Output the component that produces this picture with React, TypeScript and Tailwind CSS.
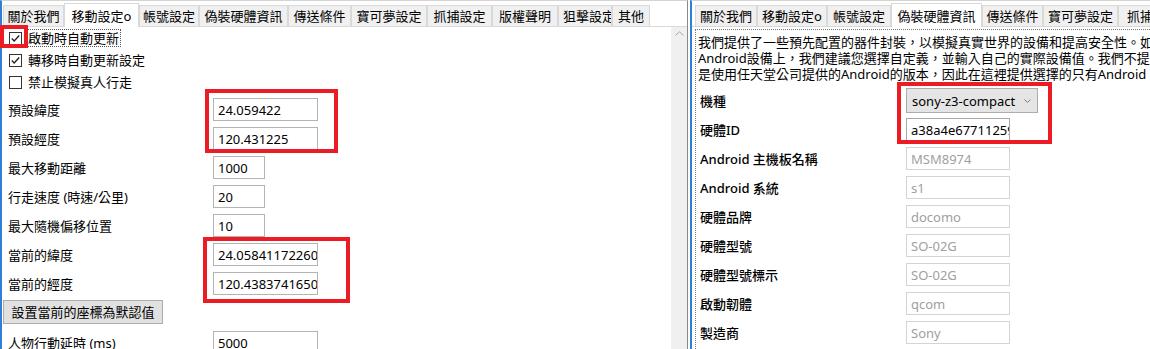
import React from "react";

/* ---------- shared bits ---------- */
function Tab({ label, w, active, clip }: { label: string; w: number; active?: boolean; clip?: boolean }) {
  return (
    <div
      className={
        active
          ? "relative z-10 mb-[-1px] flex h-[24px] shrink-0 items-center justify-center border border-b-0 border-[#d9d9d9] bg-white"
          : "flex h-[21px] shrink-0 items-center justify-center border border-b-0 border-[#d9d9d9] bg-[#f0f0f0]"
      }
      style={{ width: w }}
    >
      <span className={clip ? "overflow-hidden whitespace-nowrap pl-[4px] self-stretch flex items-center w-full" : "whitespace-nowrap"}>
        {label}
      </span>
    </div>
  );
}

function Check({ on }: { on?: boolean }) {
  return (
    <svg width="13" height="13" viewBox="0 0 13 13" className="shrink-0">
      <rect x="0.5" y="0.5" width="12" height="12" fill="#fff" stroke="#333" />
      {on && <path d="M2.8 6.6 L5.2 9 L10.2 3.6" fill="none" stroke="#222" strokeWidth="1.4" />}
    </svg>
  );
}

function Field({ label, value, w = 105 }: { label: string; value: string; w?: number }) {
  return (
    <div className="flex h-[29px] items-center pl-[6px]">
      <div className="w-[205px] shrink-0 whitespace-nowrap">{label}</div>
      <div
        className="flex h-[23px] items-center overflow-hidden whitespace-nowrap border border-[#b4b4b4] bg-white pl-[4px]"
        style={{ width: w }}
      >
        {value}
      </div>
    </div>
  );
}

function HwRow({ label, value, off }: { label: string; value: string; off?: boolean }) {
  return (
    <div className="flex h-[29px] items-center pl-[4px]">
      <div className="w-[206px] shrink-0 whitespace-nowrap font-medium">{label}</div>
      <div
        className={
          off
            ? "flex h-[23px] w-[104px] items-center overflow-hidden whitespace-nowrap border border-[#d4d4d4] bg-white pl-[4px] text-[#a0a0a0]"
            : "flex h-[23px] w-[104px] items-center overflow-hidden whitespace-nowrap border border-[#a8a8a8] bg-white pl-[4px]"
        }
      >
        {value}
      </div>
    </div>
  );
}

const leftTabs = [
  { label: "關於我們", w: 61 },
  { label: "移動設定o", w: 75, active: true },
  { label: "帳號設定", w: 60 },
  { label: "偽裝硬體資訊", w: 89 },
  { label: "傳送條件", w: 63 },
  { label: "寶可夢設定", w: 76 },
  { label: "抓捕設定", w: 65 },
  { label: "版權聲明", w: 66 },
  { label: "狙擊設定", w: 54, clip: true },
  { label: "其他", w: 38 },
];

const rightTabs = [
  { label: "關於我們", w: 62 },
  { label: "移動設定o", w: 70 },
  { label: "帳號設定", w: 64 },
  { label: "偽裝硬體資訊", w: 91, active: true },
  { label: "傳送條件", w: 61 },
  { label: "寶可夢設定", w: 75 },
  { label: "抓捕設定", w: 70 },
];

export default function App() {
  return (
    <div className="relative flex h-[349px] w-[1150px] overflow-hidden bg-white text-[13px] leading-[16px] text-black font-['Noto_Sans','Noto_Sans_CJK_TC',sans-serif]">
      {/* ---------- left window: 移動設定 ---------- */}
      <div className="flex h-full w-[688px] shrink-0 flex-col border-l-2 border-r border-t border-l-[#2f7fd6] border-r-[#8a8a8a] border-t-[#d4d4d4]">
        <div className="flex h-[26px] shrink-0 items-end border-b border-[#d9d9d9] pl-[1px]">
          {leftTabs.map((t) => (
            <Tab key={t.label} {...t} />
          ))}
        </div>
        <div className="flex min-h-0 flex-1">
          <div className="flex-1">
            <div className="flex h-[22px] items-center pl-[7px]">
              <Check on />
              <span className="ml-[4px] border border-dotted border-[#555] px-[1px] leading-[16px]">啟動時自動更新</span>
            </div>
            <div className="flex h-[22px] items-center pl-[7px]">
              <Check on />
              <span className="ml-[4px] border border-transparent px-[1px]">轉移時自動更新設定</span>
            </div>
            <div className="flex h-[22px] items-center pl-[7px]">
              <Check />
              <span className="ml-[4px] border border-transparent px-[1px]">禁止模擬真人行走</span>
            </div>
            <div className="mt-[2px]">
              <Field label="預設緯度" value="24.059422" />
              <Field label="預設經度" value="120.431225" />
              <Field label="最大移動距離" value="1000" w={52} />
              <Field label="行走速度 (時速/公里)" value="20" w={52} />
              <Field label="最大隨機偏移位置" value="10" w={52} />
              <Field label="當前的緯度" value="24.05841172260" />
              <Field label="當前的經度" value="120.43837416502" />
            </div>
            <button className="ml-[1px] mt-[2px] flex h-[24px] w-[160px] items-center justify-center border border-[#adadad] bg-[#e1e1e1]">
              設置當前的座標為默認值
            </button>
            <div className="mt-[4px]">
              <Field label="人物行動延時 (ms)" value="5000" />
            </div>
          </div>
          <div className="flex w-[16px] shrink-0 justify-center bg-[#f0f0f0]">
            <svg width="9" height="5" viewBox="0 0 9 5" className="mt-[4px]">
              <path d="M0.5 4.5 L4.5 0.8 L8.5 4.5" fill="none" stroke="#a6a6a6" strokeWidth="1" />
            </svg>
          </div>
        </div>
      </div>

      {/* ---------- right window: 偽裝硬體資訊 ---------- */}
      <div className="ml-[2px] flex h-full min-w-0 flex-1 flex-col overflow-hidden border-l-2 border-t border-l-[#2f7fd6] border-t-[#d4d4d4]">
        <div className="flex h-[26px] shrink-0 items-end border-b border-[#d9d9d9] pl-[3px]">
          {rightTabs.map((t) => (
            <Tab key={t.label} {...t} />
          ))}
        </div>
        <div className="ml-[3px] mt-[2px] flex-1 border-l border-t border-dotted border-[#7a7a7a]">
          <div className="whitespace-nowrap pl-[2px] pt-[4px] leading-[16px]">
            <div>我們提供了一些預先配置的器件封裝，以模擬真實世界的設備和提高安全性。如果您</div>
            <div>Android設備上，我們建議您選擇自定義，並輸入自己的實際設備值。我們不提供</div>
            <div>是使用任天堂公司提供的Android的版本，因此在這裡提供選擇的只有Android</div>
          </div>
          <div className="mt-[4px]">
            <div className="flex h-[29px] items-center pl-[4px]">
              <div className="w-[206px] shrink-0 font-medium">機種</div>
              <div className="flex h-[25px] w-[132px] items-center justify-between border border-[#acacac] bg-[#e5e5e5] pl-[5px] pr-[6px]">
                <span>sony-z3-compact</span>
                <svg width="7" height="4" viewBox="0 0 7 4">
                  <path d="M0.5 0.5 L3.5 3.5 L6.5 0.5" fill="none" stroke="#7a7a7a" strokeWidth="1" />
                </svg>
              </div>
            </div>
            <HwRow label="硬體ID" value="a38a4e67711259c" />
            <HwRow label="Android 主機板名稱" value="MSM8974" off />
            <HwRow label="Android 系統" value="s1" off />
            <HwRow label="硬體品牌" value="docomo" off />
            <HwRow label="硬體型號" value="SO-02G" off />
            <HwRow label="硬體型號標示" value="SO-02G" off />
            <HwRow label="啟動韌體" value="qcom" off />
            <HwRow label="製造商" value="Sony" off />
          </div>
        </div>
      </div>

      {/* ---------- red highlight boxes drawn over the screenshot ---------- */}
      <div className="pointer-events-none absolute left-[0px] top-[25px] h-[23px] w-[28px] border-4 border-[#ec1c24]" />
      <div className="pointer-events-none absolute left-[205px] top-[89px] h-[64px] w-[133px] border-4 border-[#ec1c24]" />
      <div className="pointer-events-none absolute left-[203px] top-[237px] h-[66px] w-[147px] border-4 border-[#ec1c24]" />
      <div className="pointer-events-none absolute left-[897px] top-[82px] h-[62px] w-[155px] border-4 border-[#ec1c24]" />
    </div>
  );
}
